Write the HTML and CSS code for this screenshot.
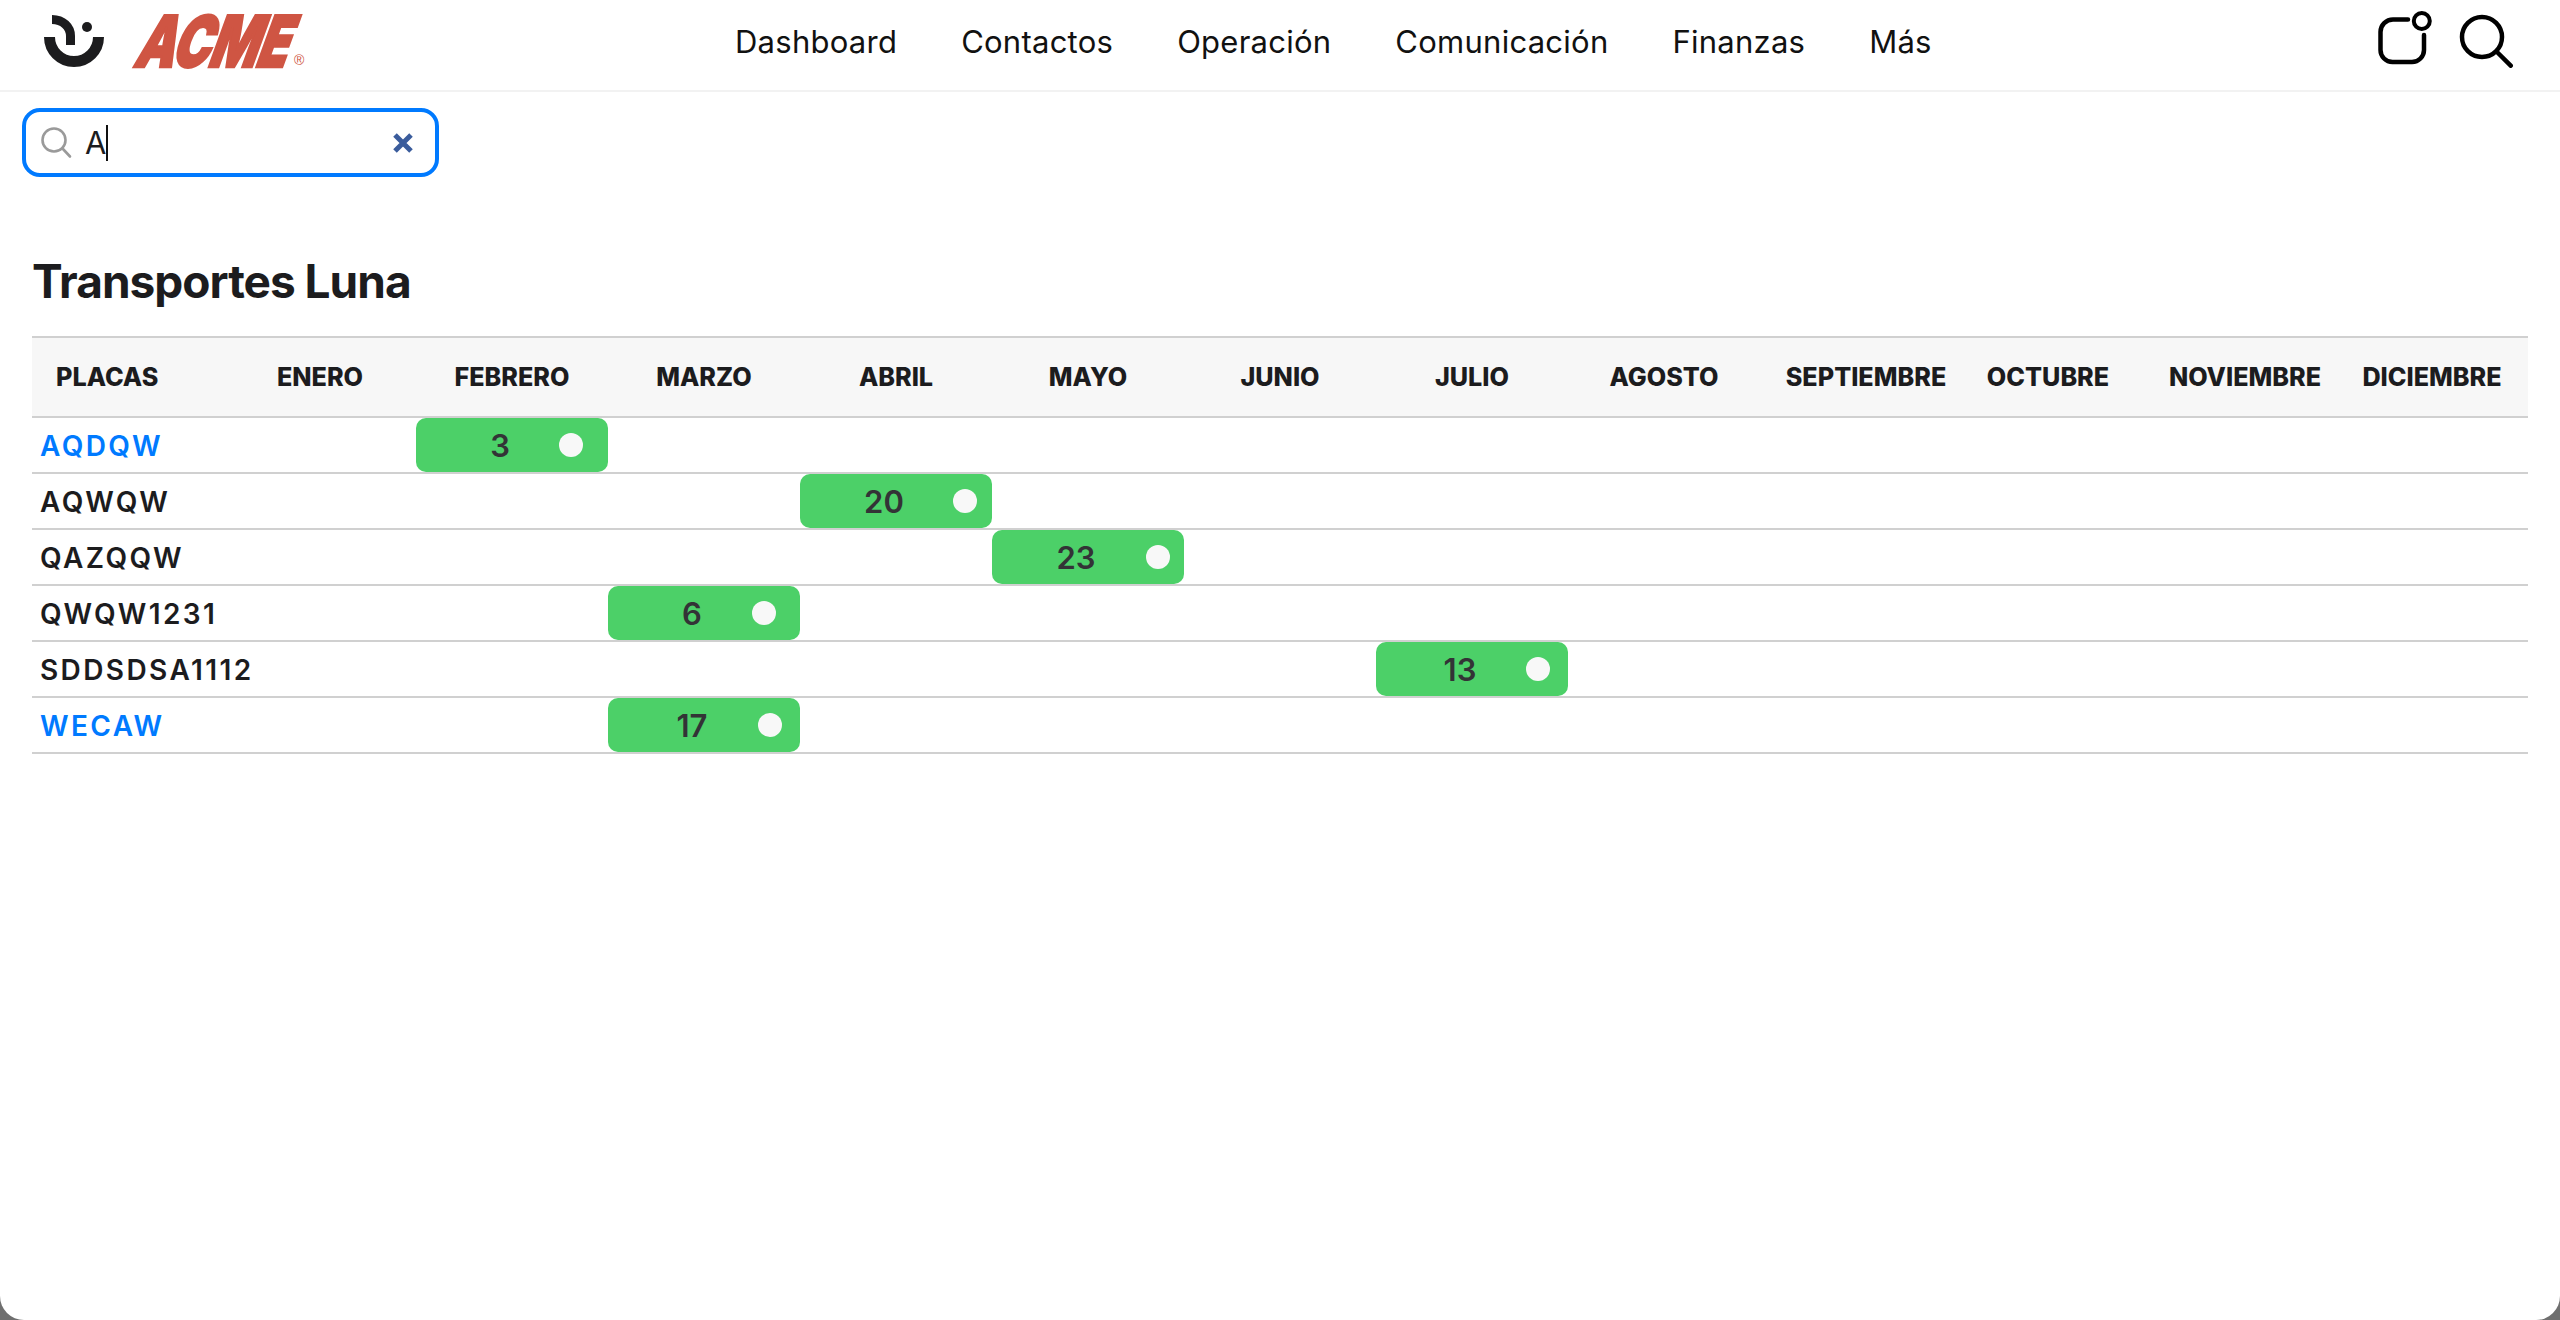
FILE: index.html
```html
<!DOCTYPE html>
<html lang="es">
<head>
<meta charset="utf-8">
<title>Transportes Luna</title>
<link rel="stylesheet" href="styles.css">
</head>
<body>
<div class="app">
  <header class="topbar">
    <div class="brand">
      <svg class="mark" width="60" height="54" viewBox="44 14 60 54" aria-hidden="true">
        <path d="M49.500 37a24.500 24.500 0 0 0 49 0" fill="none" stroke="#1c1c1e" stroke-width="11"/>
        <path d="M52 19.500C63 19.500 70.500 27 70.500 36V45" fill="none" stroke="#1c1c1e" stroke-width="9"/>
        <circle cx="87" cy="27" r="5" fill="#1c1c1e"/>
      </svg>
      <span class="acme">ACME</span><span class="reg">®</span>
    </div>
    <nav class="nav">
      <a>Dashboard</a><a>Contactos</a><a>Operación</a><a>Comunicación</a><a>Finanzas</a><a>Más</a>
    </nav>
    <div class="actions">
      <svg width="60" height="60" viewBox="2372 8 60 60" aria-hidden="true">
        <path d="M2408 19.500H2393A12.500 12.500 0 0 0 2380.500 32V50A12 12 0 0 0 2392.500 62H2412A12 12 0 0 0 2424 50V35" fill="none" stroke="#000" stroke-width="4.500" stroke-linecap="round"/>
        <circle cx="2421.800" cy="21" r="8" fill="none" stroke="#000" stroke-width="4"/>
      </svg>
      <svg width="60" height="60" viewBox="2456 8 60 60" aria-hidden="true">
        <circle cx="2482" cy="37" r="20" fill="none" stroke="#000" stroke-width="4.500"/>
        <path d="M2497 52L2510.700 65.700" fill="none" stroke="#000" stroke-width="4.500" stroke-linecap="round"/>
      </svg>
    </div>
  </header>

  <div class="searchbar">
    <svg width="32" height="32" viewBox="0 0 32 32" aria-hidden="true">
      <circle cx="13" cy="13" r="11.500" fill="none" stroke="#9a9a9a" stroke-width="2.600"/>
      <path d="M21.500 21.500L29 29.500" fill="none" stroke="#9a9a9a" stroke-width="2.600" stroke-linecap="round"/>
    </svg>
    <span class="query">A</span><span class="caret"></span>
    <svg class="clear" width="20" height="20" viewBox="0 0 20 20" aria-hidden="true">
      <path d="M2 2L18 18M18 2L2 18" fill="none" stroke="#3a5c9c" stroke-width="5"/>
    </svg>
  </div>

  <h1 class="title">Transportes Luna</h1>

  <table class="grid">
    <thead>
      <tr>
        <th class="first">PLACAS</th><th>ENERO</th><th>FEBRERO</th><th>MARZO</th><th>ABRIL</th><th>MAYO</th><th>JUNIO</th><th>JULIO</th><th>AGOSTO</th><th class="wide">SEPTIEMBRE</th><th>OCTUBRE</th><th class="mid">NOVIEMBRE</th><th>DICIEMBRE</th>
      </tr>
    </thead>
    <tbody>
      <tr><td class="plate link">AQDQW</td><td></td><td><div class="pill"><span class="num">3</span><i class="dot" style="left:143px"></i></div></td><td></td><td></td><td></td><td></td><td></td><td></td><td></td><td></td><td></td><td></td></tr>
      <tr><td class="plate">AQWQW</td><td></td><td></td><td></td><td><div class="pill"><span class="num">20</span><i class="dot" style="left:153px"></i></div></td><td></td><td></td><td></td><td></td><td></td><td></td><td></td><td></td></tr>
      <tr><td class="plate">QAZQQW</td><td></td><td></td><td></td><td></td><td><div class="pill"><span class="num">23</span><i class="dot" style="left:154px"></i></div></td><td></td><td></td><td></td><td></td><td></td><td></td><td></td></tr>
      <tr><td class="plate">QWQW1231</td><td></td><td></td><td><div class="pill"><span class="num">6</span><i class="dot" style="left:144px"></i></div></td><td></td><td></td><td></td><td></td><td></td><td></td><td></td><td></td><td></td></tr>
      <tr><td class="plate">SDDSDSA1112</td><td></td><td></td><td></td><td></td><td></td><td></td><td><div class="pill"><span class="num">13</span><i class="dot" style="left:150px"></i></div></td><td></td><td></td><td></td><td></td><td></td></tr>
      <tr><td class="plate link">WECAW</td><td></td><td></td><td><div class="pill"><span class="num">17</span><i class="dot" style="left:150px"></i></div></td><td></td><td></td><td></td><td></td><td></td><td></td><td></td><td></td><td></td></tr>
    </tbody>
  </table>
</div>
</body>
</html>
```

FILE: styles.css
```css
* { box-sizing: border-box; }
html, body { margin: 0; height: 100%; }
body {
  background: #6f6f6f;
  font-family: Inter, "Liberation Sans", sans-serif;
  color: #1c1c1e;
  overflow: hidden;
}
.app {
  height: 1320px;
  background: #fff;
  border-radius: 0 0 24px 24px;
  display: flex;
  flex-direction: column;
  align-items: flex-start;
}
.topbar {
  width: 100%;
  height: 92px;
  flex: none;
  border-bottom: 2px solid #f2f2f2;
  display: grid;
  grid-template-columns: 735px auto 1fr;
  align-items: center;
}
.brand {
  display: flex;
  align-items: flex-start;
  padding-left: 44px;
  height: 90px;
  padding-top: 14px;
}
.mark { flex: none; }
.acme {
  margin-left: 28px;
  width: 160px;
  height: 54px;
  font-family: Inter, sans-serif;
  font-weight: 900;
  font-size: 71px;
  line-height: 54px;
  color: #cf5543;
  -webkit-text-stroke: 2.500px #cf5543;
  letter-spacing: -1px;
  white-space: nowrap;
  transform-origin: 0 100%;
  transform: skewX(-20deg) scaleX(.71);
}
.reg {
  margin: 38px 0 0 2px;
  font-family: "Liberation Sans", sans-serif;
  font-size: 14px;
  line-height: 16px;
  color: #cf5543;
}
.nav {
  display: flex;
  gap: 64px;
  margin-top: -6px;
  font-size: 31px;
  letter-spacing: .25px;
  line-height: 40px;
  color: #111;
}
.actions {
  display: flex;
  justify-content: flex-end;
  align-items: center;
  gap: 24px;
  padding: 0 44px 14px 0;
}
.searchbar {
  margin: 16px 0 0 22px;
  width: 417px;
  height: 69px;
  border: 4px solid #007aff;
  border-radius: 18px;
  display: flex;
  align-items: center;
  padding: 0 22px 0 15px;
}
.query {
  margin-left: 12px;
  font-size: 31px;
  line-height: 36px;
  color: #1c1c1e;
}
.caret {
  width: 2px;
  height: 36px;
  background: #111;
}
.clear { margin-left: auto; }
.title {
  margin: 76px 0 0 32px;
  font-size: 46px;
  line-height: 56px;
  font-weight: 700;
  letter-spacing: -1px;
  color: #1c1c1e;
}
.grid {
  margin: 27px 0 0 32px;
  width: 2496px;
  table-layout: fixed;
  border-collapse: separate;
  border-spacing: 0;
}
.grid th {
  height: 82px;
  padding: 0;
  background: #f7f7f7;
  border-top: 2px solid #d0d0d0;
  border-bottom: 2px solid #d0d0d0;
  font-size: 25.200px;
  font-weight: 800;
  text-align: center;
  white-space: nowrap;
}
.grid th.first { text-align: left; padding-left: 24px; }
.grid th.wide { padding-left: 20px; }
.grid th.mid { padding-left: 10px; }
.grid td {
  height: 56px;
  padding: 0;
  border-bottom: 2px solid #d0d0d0;
}
.grid td.plate {
  padding: 2px 0 0 8px;
  font-size: 28px;
  font-weight: 600;
  letter-spacing: 2.400px;
  white-space: nowrap;
}
.grid td.link { color: #007aff; }
.pill {
  position: relative;
  height: 54px;
  background: #4cd068;
  border-radius: 10px;
  display: flex;
  align-items: center;
}
.num {
  width: 168px;
  padding-top: 1px;
  text-align: center;
  font-size: 31px;
  font-weight: 600;
  color: #333336;
}
.dot {
  position: absolute;
  top: 15px;
  width: 24px;
  height: 24px;
  border-radius: 50%;
  background: #f8f8f8;
}
```
